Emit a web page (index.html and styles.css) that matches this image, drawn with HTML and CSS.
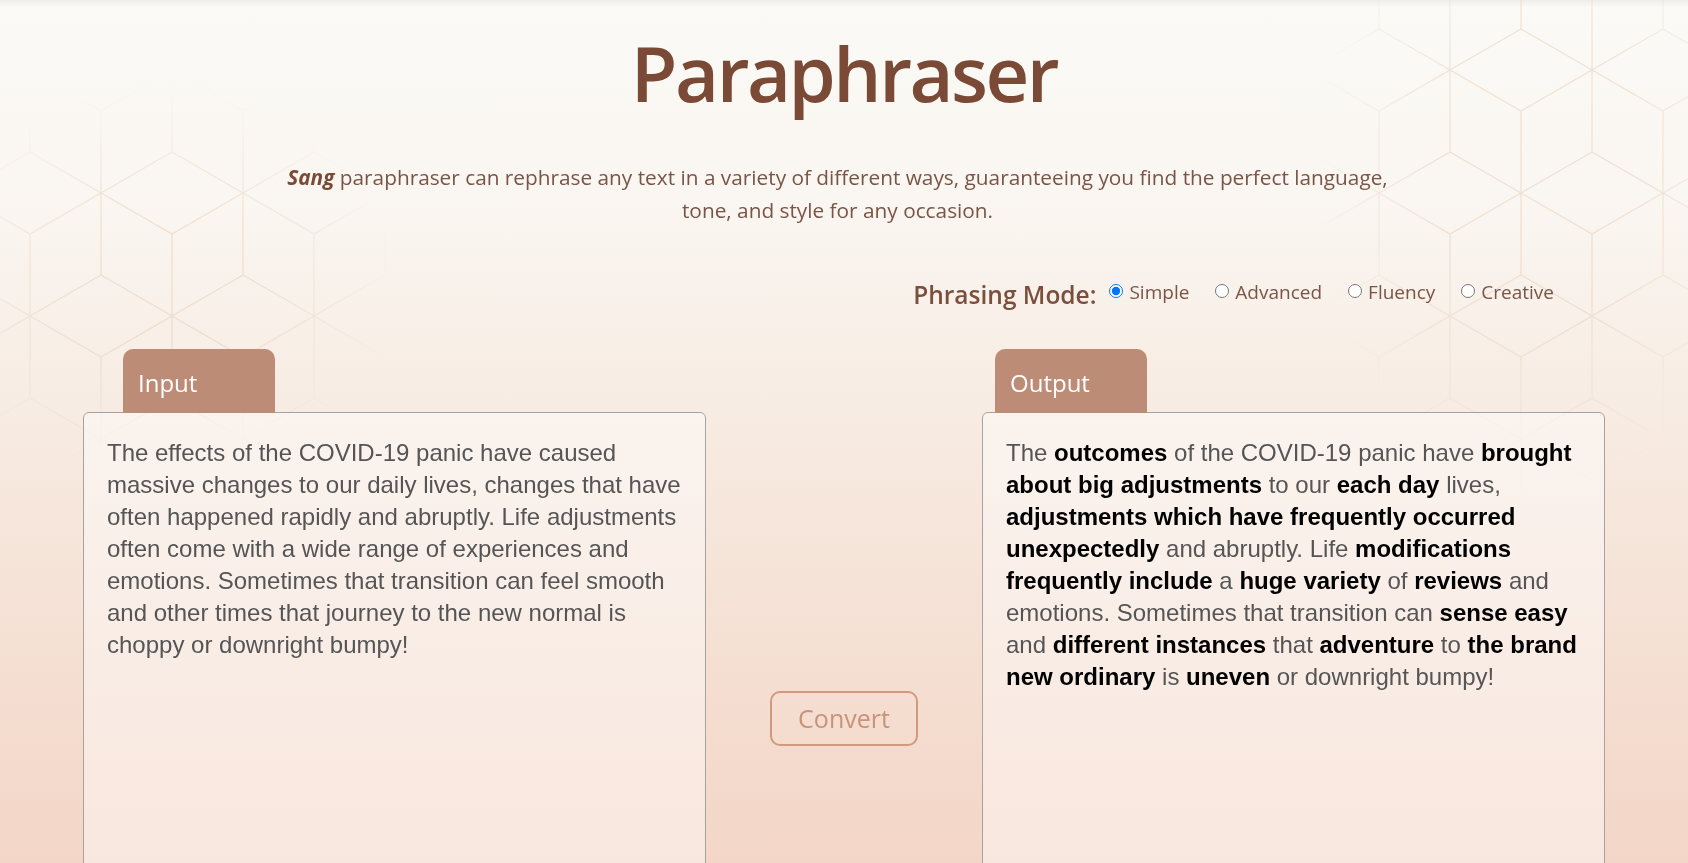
FILE: index.html
```html
<!DOCTYPE html>
<html lang="en">
<head>
<meta charset="utf-8">
<title>Paraphraser</title>
<link rel="stylesheet" href="styles.css">
</head>
<body>
<div class="backdrop" aria-hidden="true">
  <svg class="hexes" width="100%" height="100%" xmlns="http://www.w3.org/2000/svg">
    <defs>
      <pattern id="cubes" width="142" height="246" patternUnits="userSpaceOnUse" patternTransform="translate(30 -53)">
        <path fill="none" stroke="#e4cbb3" stroke-width="1.2" d="M71 0 L142 41 L142 123 L71 164 L0 123 L0 41 Z M71 82 L71 0 M71 82 L0 123 M71 82 L142 123 M0 123 L71 164 L71 246 L0 287 L-71 246 L-71 164 Z M0 205 L0 123 M0 205 L-71 246 M0 205 L71 246 M142 123 L213 164 L213 246 L142 287 L71 246 L71 164 Z M142 205 L142 123 M142 205 L71 246 M142 205 L213 246 M0 -123 L71 -82 L71 0 L0 41 L-71 0 L-71 -82 Z M0 -41 L0 -123 M0 -41 L-71 0 M0 -41 L71 0 M142 -123 L213 -82 L213 0 L142 41 L71 0 L71 -82 Z M142 -41 L142 -123 M142 -41 L71 0 M142 -41 L213 0"/>
      </pattern>
    </defs>
    <rect width="100%" height="100%" fill="url(#cubes)"/>
  </svg>
</div>
<div class="page">
  <header class="hero">
    <h1 class="title">Paraphraser</h1>
    <p class="lead"><em class="brand">Sang</em> paraphraser can rephrase any text in a variety of different ways, guaranteeing you find the perfect language,<br>tone, and style for any occasion.</p>
  </header>

  <div class="modes">
    <span class="modes-label">Phrasing Mode:</span>
    <label class="mode"><input type="radio" name="mode" checked> Simple</label>
    <label class="mode"><input type="radio" name="mode"> Advanced</label>
    <label class="mode"><input type="radio" name="mode"> Fluency</label>
    <label class="mode"><input type="radio" name="mode"> Creative</label>
  </div>

  <main class="workspace">
    <section class="panel panel-input">
      <div class="tab">Input</div>
      <div class="box">The effects of the COVID-19 panic have caused massive changes to our daily lives, changes that have often happened rapidly and abruptly. Life adjustments often come with a wide range of experiences and emotions. Sometimes that transition can feel smooth and other times that journey to the new normal is choppy or downright bumpy!</div>
    </section>

    <div class="actions">
      <button class="convert" type="button">Convert</button>
    </div>

    <section class="panel panel-output">
      <div class="tab">Output</div>
      <div class="box">The <b>outcomes</b> of the COVID-19 panic have <b>brought about big adjustments</b> to our <b>each day</b> lives, <b>adjustments which have frequently occurred unexpectedly</b> and abruptly. Life <b>modifications frequently include</b> a <b>huge variety</b> of <b>reviews</b> and emotions. Sometimes that transition can <b>sense easy</b> and <b>different instances</b> that <b>adventure</b> to <b>the brand new ordinary</b> is <b>uneven</b> or downright bumpy!</div>
    </section>
  </main>
</div>
</body>
</html>
```

FILE: styles.css
```css
html {
  overflow: hidden;
}

body {
  margin: 0;
  min-height: 100vh;
  font-family: "Open Sans", "Noto Sans", sans-serif;
  background:
    linear-gradient(to bottom, rgba(0, 0, 0, 0.05), rgba(0, 0, 0, 0) 7px),
    linear-gradient(to bottom, #fbfaf6 0px, #faf6f1 200px, #f7ebe2 420px, #f5e0d4 640px, #f3d6c7 863px);
  background-repeat: no-repeat;
  background-size: 100% 863px;
}

.backdrop {
  position: fixed;
  inset: 0;
  z-index: 0;
  pointer-events: none;
  -webkit-mask-image:
    radial-gradient(ellipse 230px 330px at 1540px 170px, #000 45%, rgba(0,0,0,0) 100%),
    radial-gradient(ellipse 240px 200px at 160px 280px, #000 40%, rgba(0,0,0,0) 100%);
  mask-image:
    radial-gradient(ellipse 230px 330px at 1540px 170px, #000 45%, rgba(0,0,0,0) 100%),
    radial-gradient(ellipse 240px 200px at 160px 280px, #000 40%, rgba(0,0,0,0) 100%);
  opacity: 0.5;
}

.hexes {
  display: block;
}

.page {
  position: relative;
  z-index: 1;
  display: flex;
  flex-direction: column;
  align-items: center;
  padding-top: 33px;
}

.hero {
  display: flex;
  flex-direction: column;
  align-items: center;
  text-align: center;
}

.title {
  margin: 0;
  font-size: 76px;
  line-height: 80px;
  font-weight: 600;
  letter-spacing: -2.5px;
  color: #7b4a37;
}

.lead {
  margin: 48px 0 0;
  padding-right: 13px;
  font-size: 20.8px;
  line-height: 33px;
  color: #7a5447;
  white-space: nowrap;
}

.brand {
  font-weight: 700;
  font-style: italic;
  color: #7b4a37;
}

.modes {
  align-self: stretch;
  display: flex;
  justify-content: flex-end;
  align-items: center;
  padding-right: 134px;
  margin-top: 48px;
  height: 34px;
  color: #7a5447;
}

.modes-label {
  font-size: 24.5px;
  font-weight: 600;
  color: #7b4f3e;
  margin-right: 13px;
  position: relative;
  top: 2px;
}

.mode {
  display: flex;
  align-items: center;
  font-size: 19px;
  margin-left: 26px;
}

.modes-label + .mode {
  margin-left: 0;
}

.mode input {
  margin: 0 6px 3px 0;
  width: 14px;
  height: 14px;
}

.workspace {
  margin-top: 40px;
  display: flex;
  align-items: center;
  gap: 64px;
}

.panel {
  width: 623px;
  display: flex;
  flex-direction: column;
}

.tab {
  position: relative;
  z-index: 2;
  width: 152px;
  height: 64px;
  box-sizing: border-box;
  margin-bottom: -1px;
  padding: 2px 0 0 15px;
  display: flex;
  align-items: center;
  background: #bc8c76;
  color: #ffffff;
  font-size: 24px;
  border-radius: 10px 10px 0 0;
}

.panel-input .tab {
  margin-left: 40px;
}

.panel-output .tab {
  margin-left: 13px;
}

.box {
  height: 676px;
  box-sizing: border-box;
  padding: 24px 22px 0 23px;
  border: 1px solid #a8a29d;
  border-radius: 6px;
  background: rgba(255, 255, 255, 0.42);
  font-family: "Liberation Sans", Arial, sans-serif;
  font-size: 24px;
  line-height: 32px;
  color: #555555;
}

.box b {
  color: #000000;
  font-weight: 700;
}

.actions {
  width: 148px;
  display: flex;
  justify-content: center;
}

.convert {
  width: 148px;
  height: 55px;
  box-sizing: border-box;
  border: 2px solid #d3997f;
  border-radius: 10px;
  background: transparent;
  color: #c9927a;
  font-family: "Open Sans", "Noto Sans", sans-serif;
  font-size: 25px;
  padding: 0 0 2px;
  cursor: pointer;
}
```
